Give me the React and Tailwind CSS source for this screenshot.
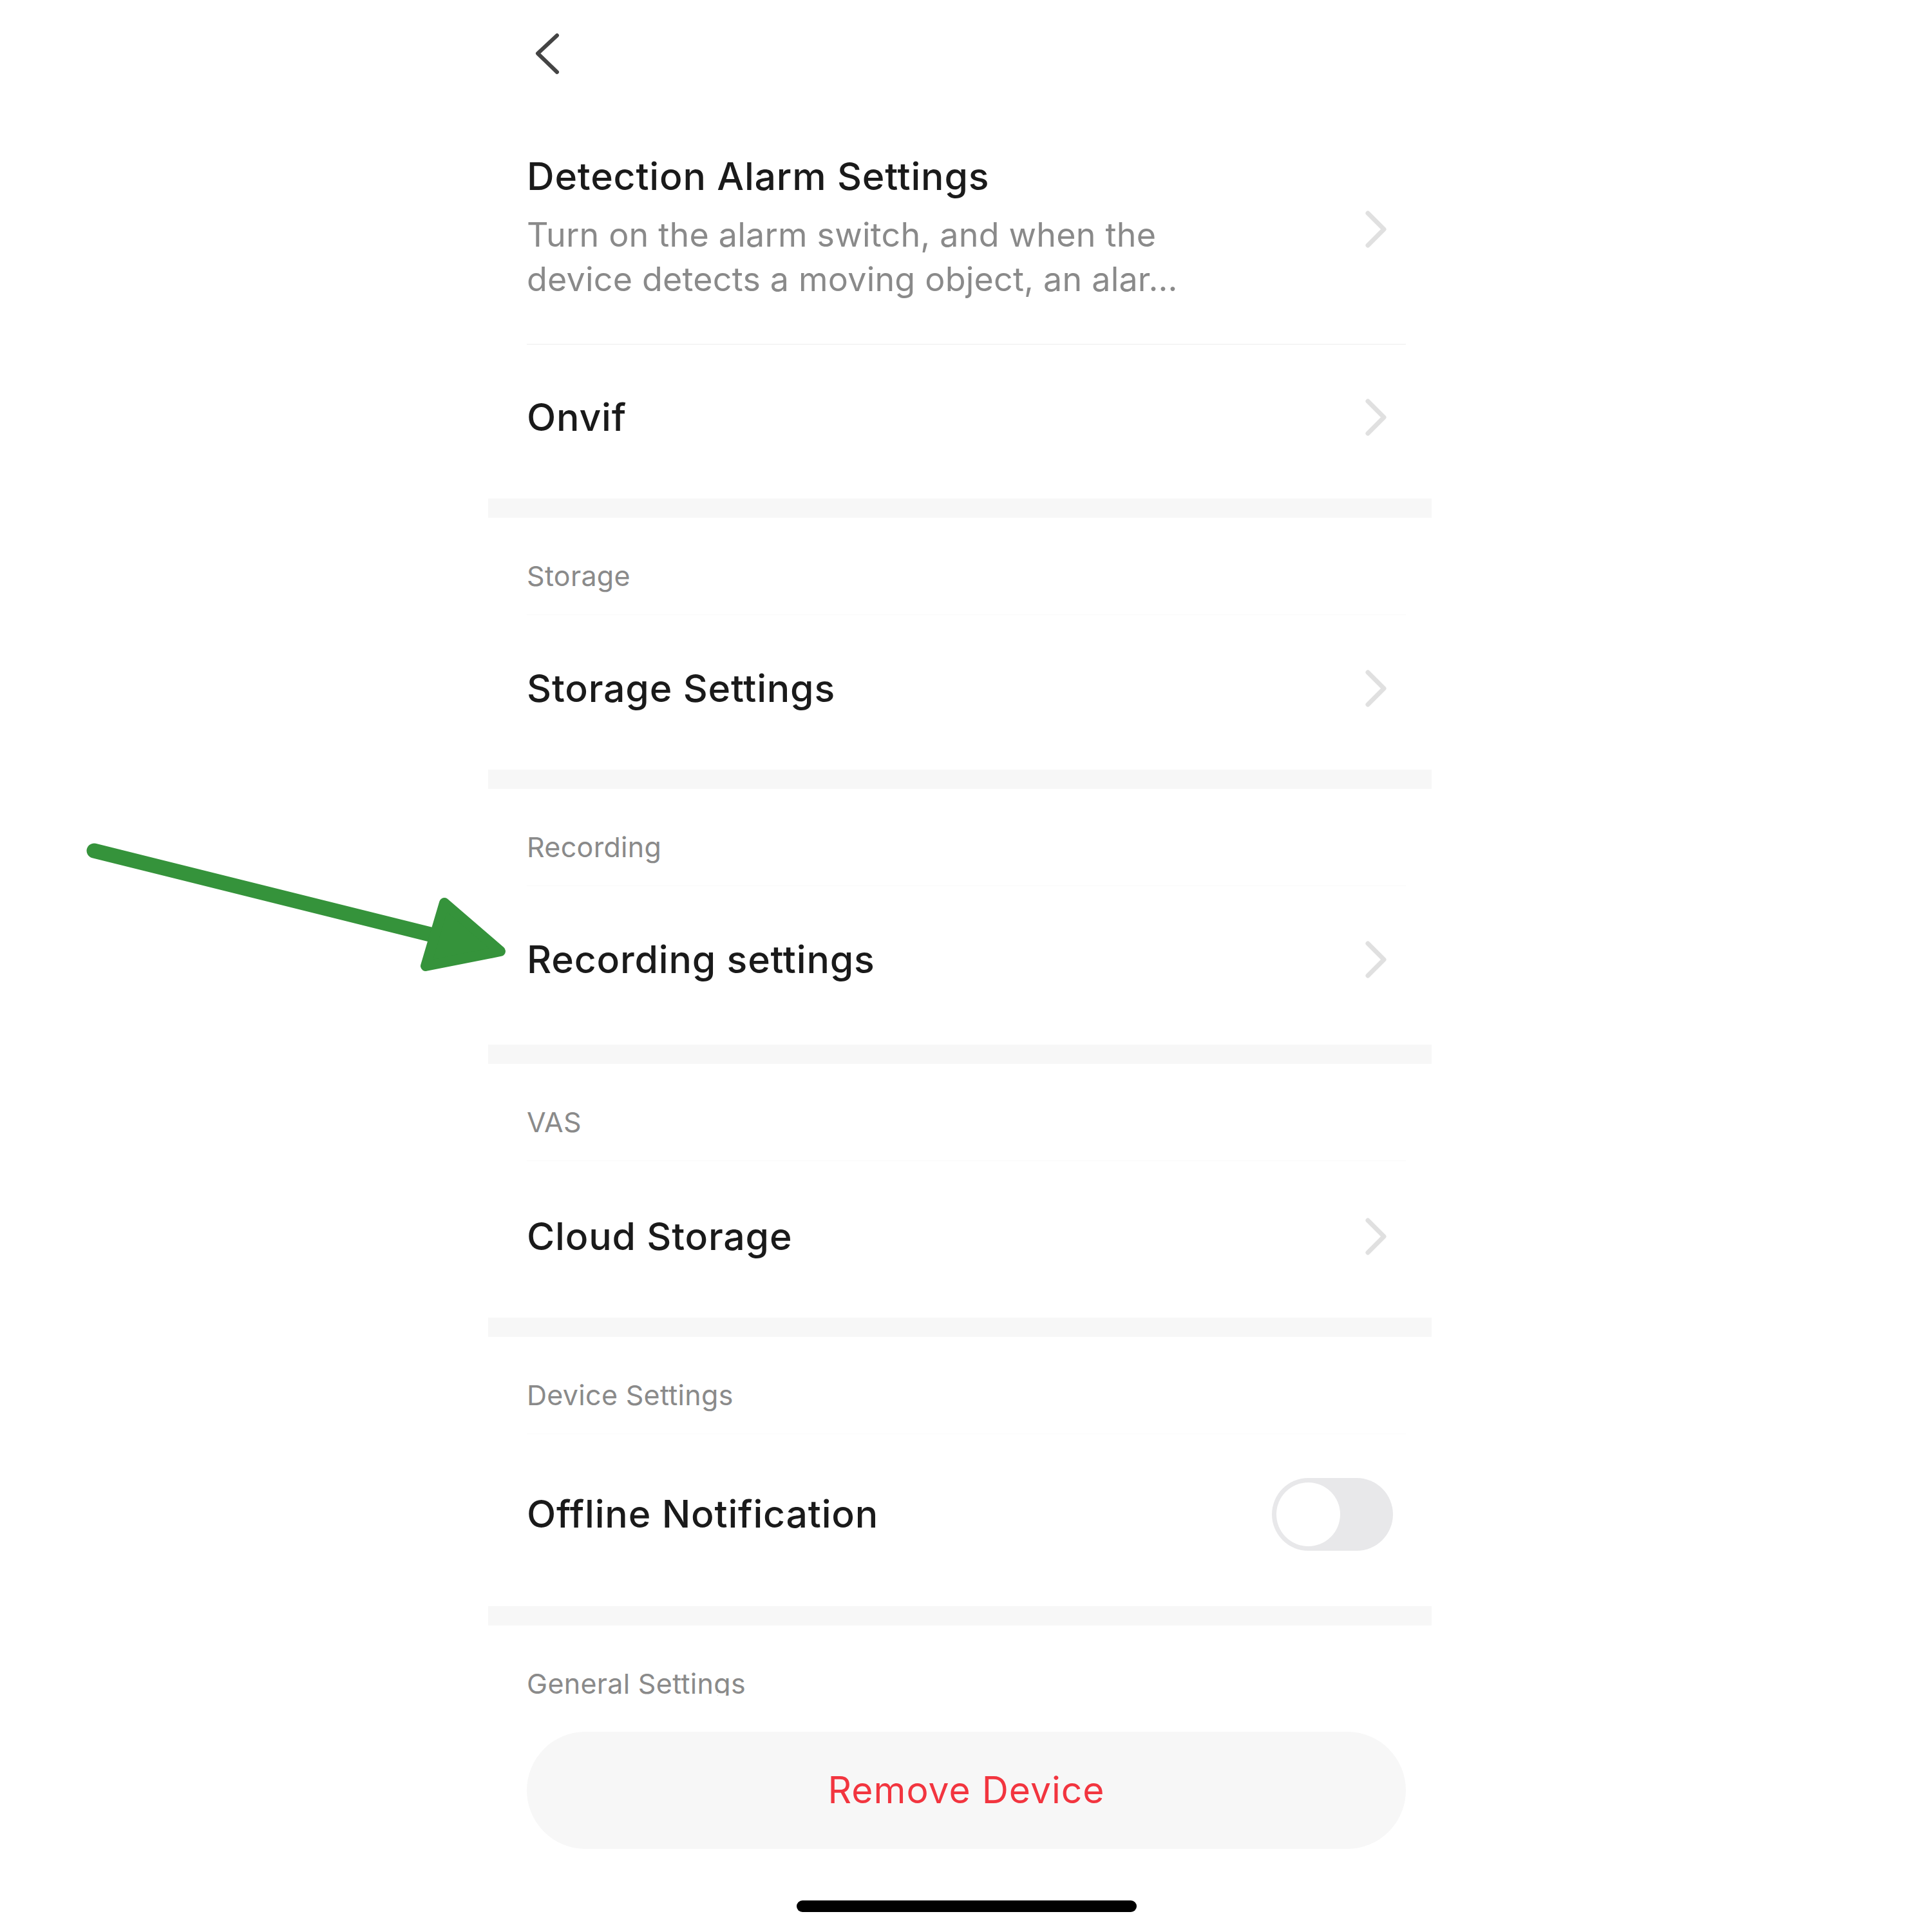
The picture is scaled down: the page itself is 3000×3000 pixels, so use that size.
const CHEVRON = (
  <svg width="36" height="58" viewBox="0 0 36 58" className="shrink-0 mr-[28px]">
    <path d="M5 4 L30 29 L5 54" fill="none" stroke="#e0e0e0" strokeWidth="7" strokeLinecap="round" strokeLinejoin="round" />
  </svg>
)

function Bar() {
  return <div className="h-[30px] bg-[#f7f7f7]" />
}

function SectionHeader({ label }) {
  return (
    <div className="pl-[60px] pr-[40px]">
      <div className="h-[150px] pt-[69px]">
        <div className="text-[43px] leading-[43px] tracking-[0.3px] text-[#8a8a8a]">{label}</div>
      </div>
      <div className="h-px bg-[#fafafa]" />
    </div>
  )
}

function NavRow({ title, h, pb }) {
  return (
    <div className={`pl-[60px] pr-[40px] flex items-center justify-between ${h} ${pb}`}>
      <span className="text-[59px] leading-[58px] tracking-[0.8px] font-medium text-[#1a1a1a]">{title}</span>
      {CHEVRON}
    </div>
  )
}

function Arrow() {
  return (
    <svg className="absolute left-0 top-0" width="900" height="1600" viewBox="0 0 900 1600">
      <line x1="146" y1="1321" x2="672" y2="1452" stroke="#35933b" strokeWidth="23" strokeLinecap="round" />
      <polygon points="690,1402 777,1477 661,1500" fill="#35933b" stroke="#35933b" strokeWidth="16" strokeLinejoin="round" />
    </svg>
  )
}

export default function App() {
  return (
    <div className="relative w-[3000px] h-[3000px] bg-white font-['Inter','Noto_Sans',sans-serif]">
      <div className="ml-[758px] w-[1465px]">
        {/* top nav */}
        <div className="h-[178px] pt-[50px] pl-[72px]">
          <svg width="40" height="66" viewBox="0 0 40 66">
            <path d="M35 5 L5 33 L35 62" fill="none" stroke="#444" strokeWidth="6" strokeLinecap="round" strokeLinejoin="round" />
          </svg>
        </div>

        {/* Detection alarm */}
        <div className="pl-[60px] pr-[40px]">
          <div className="h-[356px] flex items-center justify-between">
            <div>
              <div className="text-[59px] leading-[58px] tracking-[0.8px] font-medium text-[#1a1a1a]">Detection Alarm Settings</div>
              <div className="mt-[27px] text-[52px] leading-[69px] tracking-[0.2px] text-[#8a8a8a]">
                <div className="whitespace-nowrap">Turn on the alarm switch, and when the</div>
                <div className="whitespace-nowrap">device detects a moving object, an alar…</div>
              </div>
            </div>
            {CHEVRON}
          </div>
          <div className="h-px bg-[#ececec]" />
        </div>

        <NavRow title="Onvif" h="h-[239px]" pb="pb-[13px]" />
        <Bar />

        <SectionHeader label="Storage" />
        <NavRow title="Storage Settings" h="h-[240px]" pb="pb-[12px]" />
        <Bar />

        <SectionHeader label="Recording" />
        <NavRow title="Recording settings" h="h-[246px]" pb="pb-[19px]" />
        <Bar />

        <SectionHeader label="VAS" />
        <NavRow title="Cloud Storage" h="h-[243px]" pb="pb-[9px]" />
        <Bar />

        <SectionHeader label="Device Settings" />
        <div className="pl-[60px] pr-[40px] h-[267px] pb-[19px] flex items-center justify-between">
          <span className="text-[59px] leading-[58px] tracking-[0.8px] font-medium text-[#1a1a1a]">Offline Notification</span>
          <div className="mr-[20px] w-[188px] h-[113px] rounded-full bg-[#e8e8ea] p-[7px] flex items-center">
            <div className="w-[99px] h-[99px] rounded-full bg-white" />
          </div>
        </div>
        <Bar />

        {/* General settings, clipped under bottom bar */}
        <div className="pl-[60px] pr-[40px] pt-[69px]">
          <div className="h-[40px] overflow-hidden">
            <div className="text-[43px] leading-[43px] tracking-[0.3px] text-[#8a8a8a]">General Settings</div>
          </div>
        </div>

        <div className="pl-[60px] pr-[40px] pt-[56px]">
          <div className="h-[182px] rounded-full bg-[#f7f7f7] flex items-center justify-center">
            <span className="text-[57px] leading-[56px] tracking-[1px] text-[#f2353f]">Remove Device</span>
          </div>
        </div>
        <div className="pt-[80px] pl-[60px] pr-[40px] flex justify-center">
          <div className="w-[528px] h-[18px] rounded-full bg-black" />
        </div>
      </div>
      <Arrow />
    </div>
  )
}
